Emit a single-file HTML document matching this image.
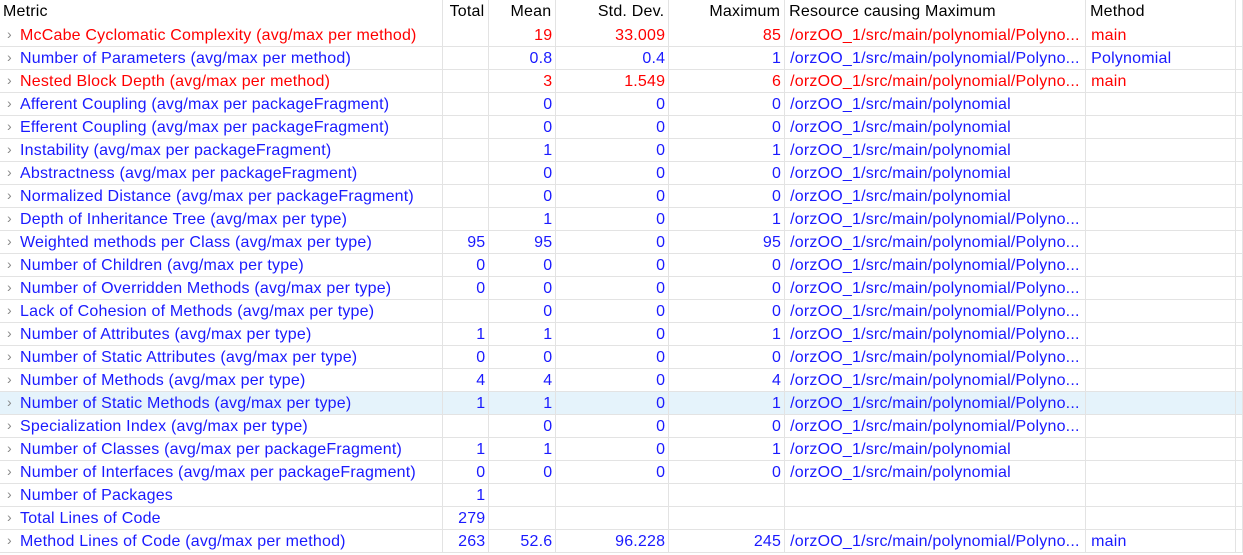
<!DOCTYPE html>
<html><head><meta charset="utf-8"><style>
body{margin:0;background:#fff;width:1243px;height:555px;overflow:hidden;font-family:"Liberation Sans","Noto Sans CJK SC",sans-serif;font-size:16px;letter-spacing:0.2px}
table{border-collapse:collapse;table-layout:fixed;position:absolute;left:0;top:0}
td,th{height:20px;padding:2px 0 0 0;line-height:20px;border-right:1px solid #e3e3e3;border-bottom:1px solid #e3e3e3;white-space:nowrap;overflow:hidden;color:#1a1aff;font-weight:normal}
th{color:#000;text-align:left;padding:0 0 0 4px;border-bottom:none;height:24px;vertical-align:top;line-height:24px}
th.r{text-align:right;padding-right:4px;padding-left:0}
td.n{text-align:right;padding-right:3px}
td.m{padding-left:20px;position:relative}
td.m:before{content:"›";position:absolute;left:7px;top:0px;line-height:20px;color:#888;font-size:14px}
td.p{padding-left:5px}
tr.red td{color:#f00}
tr.hl td{background:#e5f3fb}
</style></head><body>
<table>
<colgroup><col style="width:443px"><col style="width:46px"><col style="width:67px"><col style="width:113px"><col style="width:116px"><col style="width:301px"><col style="width:150px"><col style="width:7px"></colgroup>
<tr><th style="padding-left:3px">Metric</th><th class="r">Total</th><th class="r" style="padding-right:4px">Mean</th><th class="r">Std. Dev.</th><th class="r">Maximum</th><th>Resource causing Maximum</th><th>Method</th><th></th></tr>
<tr class="red"><td class="m">McCabe Cyclomatic Complexity (avg/max per method)</td><td class="n"></td><td class="n">19</td><td class="n">33.009</td><td class="n">85</td><td class="p">/orzOO_1/src/main/polynomial/Polyno...</td><td class="p">main</td><td></td></tr>
<tr><td class="m">Number of Parameters (avg/max per method)</td><td class="n"></td><td class="n">0.8</td><td class="n">0.4</td><td class="n">1</td><td class="p">/orzOO_1/src/main/polynomial/Polyno...</td><td class="p">Polynomial</td><td></td></tr>
<tr class="red"><td class="m">Nested Block Depth (avg/max per method)</td><td class="n"></td><td class="n">3</td><td class="n">1.549</td><td class="n">6</td><td class="p">/orzOO_1/src/main/polynomial/Polyno...</td><td class="p">main</td><td></td></tr>
<tr><td class="m">Afferent Coupling (avg/max per packageFragment)</td><td class="n"></td><td class="n">0</td><td class="n">0</td><td class="n">0</td><td class="p">/orzOO_1/src/main/polynomial</td><td></td><td></td></tr>
<tr><td class="m">Efferent Coupling (avg/max per packageFragment)</td><td class="n"></td><td class="n">0</td><td class="n">0</td><td class="n">0</td><td class="p">/orzOO_1/src/main/polynomial</td><td></td><td></td></tr>
<tr><td class="m">Instability (avg/max per packageFragment)</td><td class="n"></td><td class="n">1</td><td class="n">0</td><td class="n">1</td><td class="p">/orzOO_1/src/main/polynomial</td><td></td><td></td></tr>
<tr><td class="m">Abstractness (avg/max per packageFragment)</td><td class="n"></td><td class="n">0</td><td class="n">0</td><td class="n">0</td><td class="p">/orzOO_1/src/main/polynomial</td><td></td><td></td></tr>
<tr><td class="m">Normalized Distance (avg/max per packageFragment)</td><td class="n"></td><td class="n">0</td><td class="n">0</td><td class="n">0</td><td class="p">/orzOO_1/src/main/polynomial</td><td></td><td></td></tr>
<tr><td class="m">Depth of Inheritance Tree (avg/max per type)</td><td class="n"></td><td class="n">1</td><td class="n">0</td><td class="n">1</td><td class="p">/orzOO_1/src/main/polynomial/Polyno...</td><td></td><td></td></tr>
<tr><td class="m">Weighted methods per Class (avg/max per type)</td><td class="n">95</td><td class="n">95</td><td class="n">0</td><td class="n">95</td><td class="p">/orzOO_1/src/main/polynomial/Polyno...</td><td></td><td></td></tr>
<tr><td class="m">Number of Children (avg/max per type)</td><td class="n">0</td><td class="n">0</td><td class="n">0</td><td class="n">0</td><td class="p">/orzOO_1/src/main/polynomial/Polyno...</td><td></td><td></td></tr>
<tr><td class="m">Number of Overridden Methods (avg/max per type)</td><td class="n">0</td><td class="n">0</td><td class="n">0</td><td class="n">0</td><td class="p">/orzOO_1/src/main/polynomial/Polyno...</td><td></td><td></td></tr>
<tr><td class="m">Lack of Cohesion of Methods (avg/max per type)</td><td class="n"></td><td class="n">0</td><td class="n">0</td><td class="n">0</td><td class="p">/orzOO_1/src/main/polynomial/Polyno...</td><td></td><td></td></tr>
<tr><td class="m">Number of Attributes (avg/max per type)</td><td class="n">1</td><td class="n">1</td><td class="n">0</td><td class="n">1</td><td class="p">/orzOO_1/src/main/polynomial/Polyno...</td><td></td><td></td></tr>
<tr><td class="m">Number of Static Attributes (avg/max per type)</td><td class="n">0</td><td class="n">0</td><td class="n">0</td><td class="n">0</td><td class="p">/orzOO_1/src/main/polynomial/Polyno...</td><td></td><td></td></tr>
<tr><td class="m">Number of Methods (avg/max per type)</td><td class="n">4</td><td class="n">4</td><td class="n">0</td><td class="n">4</td><td class="p">/orzOO_1/src/main/polynomial/Polyno...</td><td></td><td></td></tr>
<tr class="hl"><td class="m">Number of Static Methods (avg/max per type)</td><td class="n">1</td><td class="n">1</td><td class="n">0</td><td class="n">1</td><td class="p">/orzOO_1/src/main/polynomial/Polyno...</td><td></td><td></td></tr>
<tr><td class="m">Specialization Index (avg/max per type)</td><td class="n"></td><td class="n">0</td><td class="n">0</td><td class="n">0</td><td class="p">/orzOO_1/src/main/polynomial/Polyno...</td><td></td><td></td></tr>
<tr><td class="m">Number of Classes (avg/max per packageFragment)</td><td class="n">1</td><td class="n">1</td><td class="n">0</td><td class="n">1</td><td class="p">/orzOO_1/src/main/polynomial</td><td></td><td></td></tr>
<tr><td class="m">Number of Interfaces (avg/max per packageFragment)</td><td class="n">0</td><td class="n">0</td><td class="n">0</td><td class="n">0</td><td class="p">/orzOO_1/src/main/polynomial</td><td></td><td></td></tr>
<tr><td class="m">Number of Packages</td><td class="n">1</td><td class="n"></td><td class="n"></td><td class="n"></td><td class="p"></td><td></td><td></td></tr>
<tr><td class="m">Total Lines of Code</td><td class="n">279</td><td class="n"></td><td class="n"></td><td class="n"></td><td class="p"></td><td></td><td></td></tr>
<tr><td class="m">Method Lines of Code (avg/max per method)</td><td class="n">263</td><td class="n">52.6</td><td class="n">96.228</td><td class="n">245</td><td class="p">/orzOO_1/src/main/polynomial/Polyno...</td><td class="p">main</td><td></td></tr>
</table>
</body></html>
